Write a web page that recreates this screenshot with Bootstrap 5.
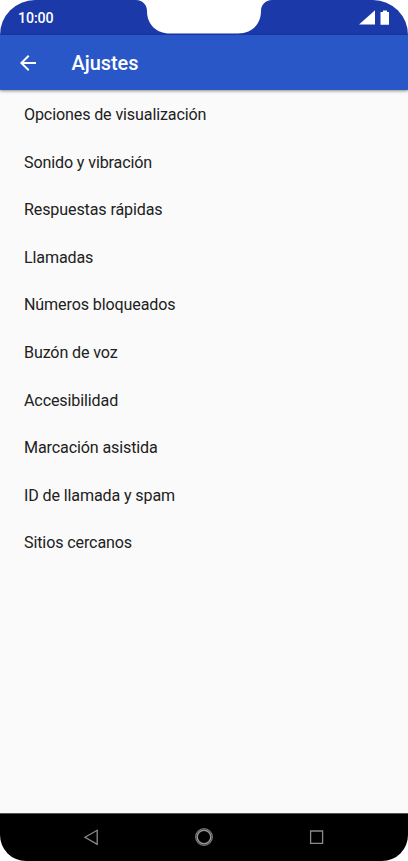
<!DOCTYPE html>
<html lang="es">
<head>
<meta charset="utf-8">
<meta name="viewport" content="width=device-width, initial-scale=1">
<title>Ajustes</title>
<link href="https://cdn.jsdelivr.net/npm/bootstrap@5.3.0/dist/css/bootstrap.min.css" rel="stylesheet">
<style>
body { font-family: Roboto, "Liberation Sans", sans-serif; background: #fff; }
.phone { width: 408px; height: 861px; background: #fafafa; border-radius: 35px 35px 26px 26px; }
.status { height: 35px; background: #1c39a9; padding: 0 18px; }
.clock { font-size: 14.2px; font-weight: 500; line-height: 35px; padding-top: 1px; letter-spacing: -.1px; }
.notch { left: 136px; top: 0; }
.appbar { height: 55px; background: #2a57c7; box-shadow: 0 1px 3px rgba(0,0,0,.45); padding-left: 16px; z-index: 1; }
.appbar h1 { font-size: 19.9px; font-weight: 500; margin-left: 31.5px; line-height: 24px; padding-top: 2px; }
.settings { --bs-list-group-bg: transparent; --bs-list-group-color: #212121; padding-top: 1.3px; }
.settings .list-group-item { height: 47.6px; font-size: 16.1px; letter-spacing: -.13px; line-height: 24px; padding: 0 24px; }
.navkeys { height: 48px; background: #000; border-top: 1px solid #555; }
</style>
<script src="https://cdn.jsdelivr.net/npm/bootstrap@5.3.0/dist/js/bootstrap.bundle.min.js"></script>
</head>
<body>
<div class="phone d-flex flex-column overflow-hidden position-relative">
  <div class="status d-flex justify-content-between align-items-center text-white">
    <span class="clock">10:00</span>
    <svg width="31" height="16" viewBox="0 0 31 16" fill="#fff"><path d="M0 14.500 16 .3V14.500Z"/><path d="M22 2H24V.5H28V2H30V14.800H21.500V2Z"/></svg>
  </div>
  <svg class="notch position-absolute" width="136" height="35" viewBox="0 0 136 35"><path d="M0 0C7 .5 11 5 11 11C11 24 20 33.500 34 33.500H102C116 33.500 125 24 125 11C125 5 129 .5 136 0Z" fill="#fff"/></svg>
  <header class="appbar d-flex align-items-center text-white position-relative">
    <svg width="24" height="24" viewBox="0 0 24 24" fill="#fff"><path d="M20 11H7.830L13.420 5.410 12 4 4 12 12 20 13.410 18.590 7.830 13H20Z"/></svg>
    <h1 class="mb-0">Ajustes</h1>
  </header>
  <main class="flex-grow-1">
    <ul class="settings list-group list-group-flush">
      <li class="list-group-item border-0 d-flex align-items-center">Opciones de visualización</li>
      <li class="list-group-item border-0 d-flex align-items-center">Sonido y vibración</li>
      <li class="list-group-item border-0 d-flex align-items-center">Respuestas rápidas</li>
      <li class="list-group-item border-0 d-flex align-items-center">Llamadas</li>
      <li class="list-group-item border-0 d-flex align-items-center">Números bloqueados</li>
      <li class="list-group-item border-0 d-flex align-items-center">Buzón de voz</li>
      <li class="list-group-item border-0 d-flex align-items-center">Accesibilidad</li>
      <li class="list-group-item border-0 d-flex align-items-center">Marcación asistida</li>
      <li class="list-group-item border-0 d-flex align-items-center">ID de llamada y spam</li>
      <li class="list-group-item border-0 d-flex align-items-center">Sitios cercanos</li>
    </ul>
  </main>
  <nav class="navkeys">
    <svg class="d-block" width="408" height="47" viewBox="0 0 408 47" fill="none" stroke="#8b8b8b" stroke-width="1.300"><path d="M85 23.300 97.200 16.300V30.300Z"/><circle cx="204" cy="23" r="8.300" stroke="#777" stroke-width="1.300"/><circle cx="204" cy="23" r="6.800" stroke="#999" stroke-width="1.400"/><path d="M310.600 17H322.600V29.400H310.600Z"/></svg>
  </nav>
</div>
</body>
</html>
